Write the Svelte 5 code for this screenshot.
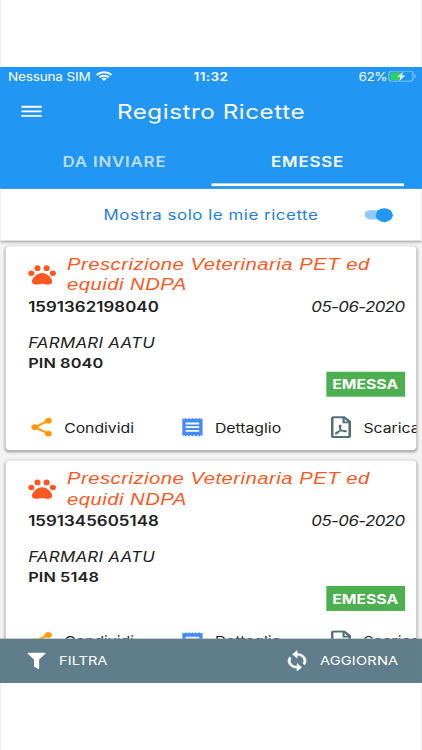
<script lang="ts">
  type Recipe = {
    title: string
    code: string
    date: string
    owner: string
    pin: string
    status: string
  }

  const recipes: Recipe[] = [
    {
      title: "Prescrizione Veterinaria PET ed equidi NDPA",
      code: "1591362198040",
      date: "05-06-2020",
      owner: "FARMARI AATU",
      pin: "PIN 8040",
      status: "EMESSA",
    },
    {
      title: "Prescrizione Veterinaria PET ed equidi NDPA",
      code: "1591345605148",
      date: "05-06-2020",
      owner: "FARMARI AATU",
      pin: "PIN 5148",
      status: "EMESSA",
    },
  ]

  const tabs = ["DA INVIARE", "EMESSE"]

  let activeTab = $state("EMESSE")
  let onlyMine = $state(true)
</script>

<div class="page">
  <div class="phone">
    <header>
      <div class="status">
        <span class="carrier">Nessuna SIM</span>
        <svg class="wifi" viewBox="0 0 16 12">
          <path d="M8 11.6 5.5 9a3.5 3.5 0 0 1 5 0z" fill="#fff" stroke="none" />
          <path d="M3.6 7.2a6.2 6.2 0 0 1 8.8 0M1 4.4a9.9 9.9 0 0 1 14 0" />
        </svg>
        <span class="time">11:32</span>
        <span class="percent">62%</span>
        <svg class="battery" viewBox="0 0 25 12">
          <rect class="shell" x=".5" y=".5" width="21.5" height="11" rx="2.8" />
          <rect x="2" y="2" width="9.5" height="8" rx="1" fill="#30d158" />
          <path d="M23.3 4v4c1.4-.6 1.4-3.4 0-4z" fill="#a6d5fa" />
          <path d="M13.3 1.2 8 6.8h3l-1.2 4.3 5.4-5.9h-3.1z" fill="#fff" />
        </svg>
      </div>

      <div class="toolbar">
        <button class="menu" aria-label="Menu">
          <svg viewBox="0 0 24 24"><path d="M3 18h18v-2H3v2zm0-5h18v-2H3v2zm0-7v2h18V6H3z" /></svg>
        </button>
        <h1>Registro Ricette</h1>
      </div>

      <nav>
        {#each tabs as tab}
          <button class="tab" class:active={activeTab === tab} onclick={() => (activeTab = tab)}>
            <span>{tab}</span>
          </button>
        {/each}
      </nav>
    </header>

    <div class="filter">
      <span>Mostra solo le mie ricette</span>
      <button
        class="switch"
        class:on={onlyMine}
        role="switch"
        aria-checked={onlyMine}
        aria-label="Mostra solo le mie ricette"
        onclick={() => (onlyMine = !onlyMine)}
      >
        <i></i>
      </button>
    </div>

    <main>
      {#each recipes as recipe}
        <article>
          <div class="title">
            <svg class="paw" viewBox="0 0 25 24">
              <ellipse cx="2.8" cy="10.4" rx="2.7" ry="3" />
              <ellipse cx="8.3" cy="4.8" rx="2.7" ry="3.2" />
              <ellipse cx="16.4" cy="4.8" rx="2.7" ry="3.2" />
              <ellipse cx="22" cy="10.4" rx="2.7" ry="3" />
              <path d="M12.4 10c-4.4 0-9 5.4-9 9.1 0 2.3 1.2 3.5 3.4 3.5 2.3 0 3.5-.9 5.6-.9s3.3.9 5.6.9c2.2 0 3.4-1.2 3.4-3.5 0-3.7-4.6-9.1-9-9.1z" />
            </svg>
            <h2>{recipe.title}</h2>
          </div>
          <div class="line">
            <b class="code">{recipe.code}</b>
            <em class="date">{recipe.date}</em>
          </div>
          <em class="owner">{recipe.owner}</em>
          <b class="pin">{recipe.pin}</b>
          <span class="badge">{recipe.status}</span>
          <div class="actions">
            <button class="share">
              <svg viewBox="0 0 24 24" fill="#ff9800">
                <path d="M18 16.08c-.76 0-1.44.3-1.96.77L8.91 12.7c.05-.23.09-.46.09-.7s-.04-.47-.09-.7l7.05-4.11c.54.5 1.25.81 2.04.81 1.66 0 3-1.34 3-3s-1.34-3-3-3-3 1.34-3 3c0 .24.04.47.09.7L8.04 9.81C7.5 9.31 6.79 9 6 9c-1.66 0-3 1.34-3 3s1.34 3 3 3c.79 0 1.5-.31 2.04-.81l7.12 4.16c-.05.21-.08.43-.08.65 0 1.61 1.31 2.92 2.92 2.92s2.92-1.31 2.92-2.92-1.31-2.92-2.92-2.92z" stroke="#ff9800" stroke-width=".4" />
              </svg>
              <span>Condividi</span>
            </button>
            <button class="detail">
              <svg viewBox="0 0 24 24" fill="#448aff">
                <path d="M18 17H6v-2h12v2zm0-4H6v-2h12v2zm0-4H6V7h12v2zM3 22l1.5-1.5L6 22l1.5-1.5L9 22l1.5-1.5L12 22l1.5-1.5L15 22l1.5-1.5L18 22l1.5-1.5L21 22V2l-1.5 1.5L18 2l-1.5 1.5L15 2l-1.5 1.5L12 2l-1.5 1.5L9 2 7.5 3.5 6 2 4.5 3.5 3 2v20z" />
              </svg>
              <span>Dettaglio</span>
            </button>
            <button class="download">
              <svg viewBox="0 0 18 24" fill="none" stroke="#546e7a">
                <path d="M2.6 1.2h9.2l5 5v15.2a1.4 1.4 0 0 1-1.4 1.4H2.6a1.4 1.4 0 0 1-1.4-1.4V2.6a1.4 1.4 0 0 1 1.4-1.4z" stroke-width="2.3" />
                <path d="M11.3 1.5v5.3h5.3" stroke-width="1.9" />
                <path d="M8.2 9.8c1.2 0 .7 3-.3 5.2-1 2.3-2.5 4.5-3.6 4.4-1-.2.4-2.2 3.4-3.1 2.7-.8 6-1 6.1.1 0 1-2.2.8-3.9-.8-1.4-1.4-2.4-3.4-2.4-4.7 0-.6.2-1.1.7-1.1z" stroke-width="1.2" />
              </svg>
              <span>Scarica</span>
            </button>
          </div>
        </article>
      {/each}
    </main>

    <footer>
      <button class="filtra">
        <svg viewBox="0 0 16 18"><path d="M.7 0h14.6c.7 0 .9.8.5 1.3L10.3 7.6v9.5c0 .7-.7 1-1.2.6l-3-2.4a1 1 0 0 1-.4-.8V7.6L.2 1.3C-.2.8 0 0 .7 0z" /></svg>
        <span>FILTRA</span>
      </button>
      <button class="aggiorna">
        <svg viewBox="0 0 24 24">
          <path d="M12 4V1L8 5l4 4V6c3.31 0 6 2.69 6 6 0 1.01-.25 1.97-.7 2.8l1.46 1.46C19.54 15.03 20 13.57 20 12c0-4.42-3.58-8-8-8zm0 14c-3.31 0-6-2.69-6-6 0-1.01.25-1.97.7-2.8L5.24 7.74C4.46 8.97 4 10.43 4 12c0 4.42 3.58 8 8 8v3l4-4-4-4v3z" />
        </svg>
        <span>AGGIORNA</span>
      </button>
    </footer>
  </div>
</div>

<style>
  :global(body) {
    background: #fff;
    overflow: hidden;
  }

  .page {
    box-sizing: border-box;
    width: 422px;
    height: 750px;
    padding-top: 67px;
    overflow: hidden;
    box-shadow: inset 1px 0 #eee, inset -1px 0 #eee;
  }

  /* 375x667 screen stretched over the available area */
  .phone {
    display: flex;
    flex-direction: column;
    width: 375px;
    height: 667px;
    overflow: hidden;
    background: #f3f3f3;
    color: #212121;
    font-family: Inter, "Liberation Sans", sans-serif;
    font-size: 14px;
    white-space: nowrap;
    transform: scale(1.1253, 0.9235);
    transform-origin: 0 0;
  }

  button {
    display: flex;
    align-items: center;
    padding: 0;
    border: none;
    background: none;
    color: inherit;
    font: inherit;
    letter-spacing: inherit;
    cursor: pointer;
  }

  svg {
    flex: none;
    width: 24px;
    height: 24px;
  }

  header {
    flex: none;
    height: 132px;
    background: #2196f3;
    color: #fff;
    fill: #fff;
  }

  .status {
    display: grid;
    grid-template-columns: 77.5px 94.5px 146.5px 27px 25px;
    align-items: center;
    height: 20px;
    padding-left: 7px;
    font-size: 12px;
  }

  .carrier {
    letter-spacing: -0.12px;
  }

  .wifi {
    width: 15px;
    height: 12px;
    fill: none;
    stroke: #fff;
    stroke-width: 2.3;
  }

  .time {
    margin-left: -7px;
    font-weight: 600;
    letter-spacing: 0.35px;
  }

  .percent {
    margin-left: -7px;
    letter-spacing: -0.3px;
  }

  .battery {
    width: 25px;
    height: 12px;
    margin-left: -8px;
  }

  .shell {
    fill: none;
    stroke: #90caf9;
  }

  .toolbar {
    display: grid;
    grid-template-columns: 40px 1fr 40px;
    align-items: center;
    height: 56px;
    padding: 0 16px;
  }

  h1 {
    margin: 0;
    font-size: 21.5px;
    font-weight: 400;
    text-align: center;
    letter-spacing: 0.5px;
  }

  nav {
    display: flex;
    height: 52.5px;
    padding: 0 16px;
  }

  .tab {
    flex: 1;
    justify-content: center;
    box-sizing: border-box;
    border-top: 3px solid transparent;
    border-bottom: 3px solid transparent;
    color: #bcdffb;
    font-size: 15px;
    font-weight: 600;
    letter-spacing: 0.7px;
  }

  .tab.active {
    border-bottom-color: #fff;
    color: #fff;
  }

  .filter {
    position: relative;
    display: flex;
    flex: none;
    align-items: center;
    justify-content: space-between;
    box-sizing: border-box;
    height: 56px;
    padding: 0 26px 0 92px;
    background: #fff;
    box-shadow: 0 1px 3px rgba(0, 0, 0, 0.35), inset 1px 0 #eee, inset -1px 0 #eee;
    color: #1e80d8;
    font-size: 15px;
    letter-spacing: 0.47px;
  }

  .switch {
    width: 25px;
    height: 10px;
    border-radius: 5px;
    background: #bdbdbd;
  }

  .switch i {
    width: 15px;
    height: 15px;
    border-radius: 50%;
    background: #fafafa;
  }

  .switch.on {
    justify-content: flex-end;
    background: #90caf9;
  }

  .switch.on i {
    background: #2196f3;
  }

  main {
    display: flex;
    flex: 1;
    flex-direction: column;
    gap: 10.7px;
    min-height: 0;
    padding: 6px 5px 0;
    overflow: hidden;
  }

  article {
    display: flex;
    flex: none;
    flex-direction: column;
    box-sizing: border-box;
    height: 221px;
    padding: 9px 0 0 20px;
    overflow: hidden;
    border-radius: 4px;
    background: #fff;
    box-shadow: 0 1px 3px rgba(0, 0, 0, 0.4);
  }

  .title {
    display: flex;
    align-items: center;
    gap: 9.5px;
    height: 44px;
    color: #ff5722;
    fill: #ff5722;
  }

  .paw {
    width: 25px;
  }

  h2 {
    width: 288px;
    margin: 0;
    font-family: "Liberation Sans", sans-serif;
    font-size: 18px;
    font-style: italic;
    font-weight: 400;
    line-height: 22px;
    letter-spacing: 0.44px;
    white-space: normal;
  }

  .line {
    display: flex;
    justify-content: space-between;
    padding-right: 10.5px;
    font-size: 15px;
    line-height: 26px;
  }

  .code {
    letter-spacing: 0.05px;
  }

  .date {
    letter-spacing: -0.5px;
  }

  .owner {
    margin-top: 15px;
    font-size: 15px;
    line-height: 22px;
    letter-spacing: 0.25px;
  }

  .pin {
    font-size: 14.5px;
    line-height: 22px;
    letter-spacing: 0.1px;
  }

  b {
    font-weight: 600;
  }

  .badge {
    align-self: flex-end;
    width: 70px;
    margin-top: -2px;
    margin-right: 10.5px;
    background: #4caf50;
    color: #fff;
    font-weight: 700;
    line-height: 27px;
    text-align: center;
  }

  .actions {
    display: flex;
    padding-top: 20px;
  }

  .actions button {
    flex: none;
    height: 26px;
  }

  .share {
    width: 134px;
    gap: 8px;
  }

  .detail {
    width: 135px;
    gap: 8px;
  }

  .download {
    gap: 11px;
  }

  .download svg {
    width: 18px;
  }

  footer {
    display: flex;
    flex: none;
    justify-content: space-between;
    height: 48px;
    padding: 0 21px 0 23.5px;
    background: #607d8b;
    color: #fff;
    fill: #fff;
    font-size: 13px;
  }

  .filtra {
    gap: 12px;
  }

  .filtra svg {
    width: 17px;
    height: 18px;
  }

  .aggiorna {
    gap: 8px;
    letter-spacing: 0.15px;
  }

  .aggiorna svg {
    stroke: #fff;
    stroke-width: 0.6;
  }
</style>
